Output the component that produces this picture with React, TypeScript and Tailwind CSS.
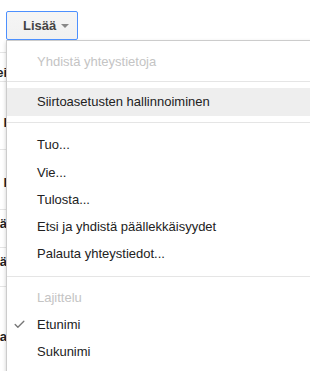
import { Check } from 'lucide-react';

const font = { fontFamily: '"Liberation Sans", Arial, sans-serif' };

function Item({ label, disabled, hover, checked }: { label: string; disabled?: boolean; hover?: boolean; checked?: boolean }) {
  return (
    <div
      className={`relative h-[27.25px] flex items-center pl-[30px] text-[13px] whitespace-nowrap ${
        disabled ? 'text-[#c4c4c4]' : 'text-[#222]'
      } ${hover ? 'bg-[#eeeeee]' : ''}`}
    >
      {checked && <Check className="absolute left-[6px] top-[7px] h-[13px] w-[13px] text-[#777]" strokeWidth={2.5} />}
      {label}
    </div>
  );
}

function Sep({ className }: { className: string }) {
  return <div className={`h-px bg-[#e5e5e5] ${className}`} />;
}

export default function App() {
  return (
    <div className="relative w-[310px] h-[371px] overflow-hidden bg-white" style={font}>
      {/* page rows behind the menu */}
      <div className="flex flex-col text-[13px] font-bold text-[#222]">
        <div className="h-[53px] border-b border-[#e5e5e5]" />
        <div className="h-[29px] border-b border-[#e5e5e5] flex justify-end items-center w-[7px] overflow-hidden pt-[11px]">
          <span className="whitespace-nowrap">Mei</span>
        </div>
        <div className="h-[68px] border-b border-[#e5e5e5] flex justify-end items-center w-[7px] overflow-hidden pt-[14px]">
          <span className="whitespace-nowrap">l</span>
        </div>
        <div className="h-[60px] border-b border-[#e5e5e5] flex justify-end items-center w-[7px] overflow-hidden pt-[6px]">
          <span className="whitespace-nowrap">l</span>
        </div>
        <div className="h-[38px] border-b border-[#e5e5e5] flex justify-end items-start w-[7px] overflow-hidden pt-[4px]">
          <span className="whitespace-nowrap">Mä</span>
        </div>
        <div className="h-[39px] border-b border-[#e5e5e5] flex justify-end items-start w-[7px] overflow-hidden pt-[4px]">
          <span className="whitespace-nowrap">Pä</span>
        </div>
        <div className="h-[84px] flex justify-end items-start w-[7px] overflow-hidden pt-[40px]">
          <span className="whitespace-nowrap">Sanna</span>
        </div>
      </div>

      {/* Lisää button */}
      <button className="absolute left-[6px] top-[11px] w-[72px] h-[29px] z-20 flex items-center gap-[5px] pl-[16px] border border-[#4d90fe] rounded-[2px] bg-gradient-to-b from-[#f5f5f5] to-[#f1f1f1] text-[13px] font-bold text-[#444]">
        Lisää
        <span className="mt-[1px] w-0 h-0 border-l-[4px] border-r-[4px] border-t-[4px] border-l-transparent border-r-transparent border-t-[#888]" />
      </button>

      {/* dropdown menu */}
      <div className="absolute left-[6px] top-[40px] right-[-4px] bottom-[-10px] z-10 bg-white border border-[#cccccc] shadow-[0_2px_4px_rgba(0,0,0,0.2)] pt-[7px]">
        <Item label="Yhdistä yhteystietoja" disabled />
        <Sep className="mt-[6px] mb-[6px]" />
        <Item label="Siirtoasetusten hallinnoiminen" hover />
        <Sep className="mt-[6px] mb-[9px]" />
        <Item label="Tuo..." />
        <Item label="Vie..." />
        <Item label="Tulosta..." />
        <Item label="Etsi ja yhdistä päällekkäisyydet" />
        <Item label="Palauta yhteystiedot..." />
        <Sep className="mt-[8px] mb-[7px]" />
        <Item label="Lajittelu" disabled />
        <Item label="Etunimi" checked />
        <Item label="Sukunimi" />
      </div>
    </div>
  );
}
